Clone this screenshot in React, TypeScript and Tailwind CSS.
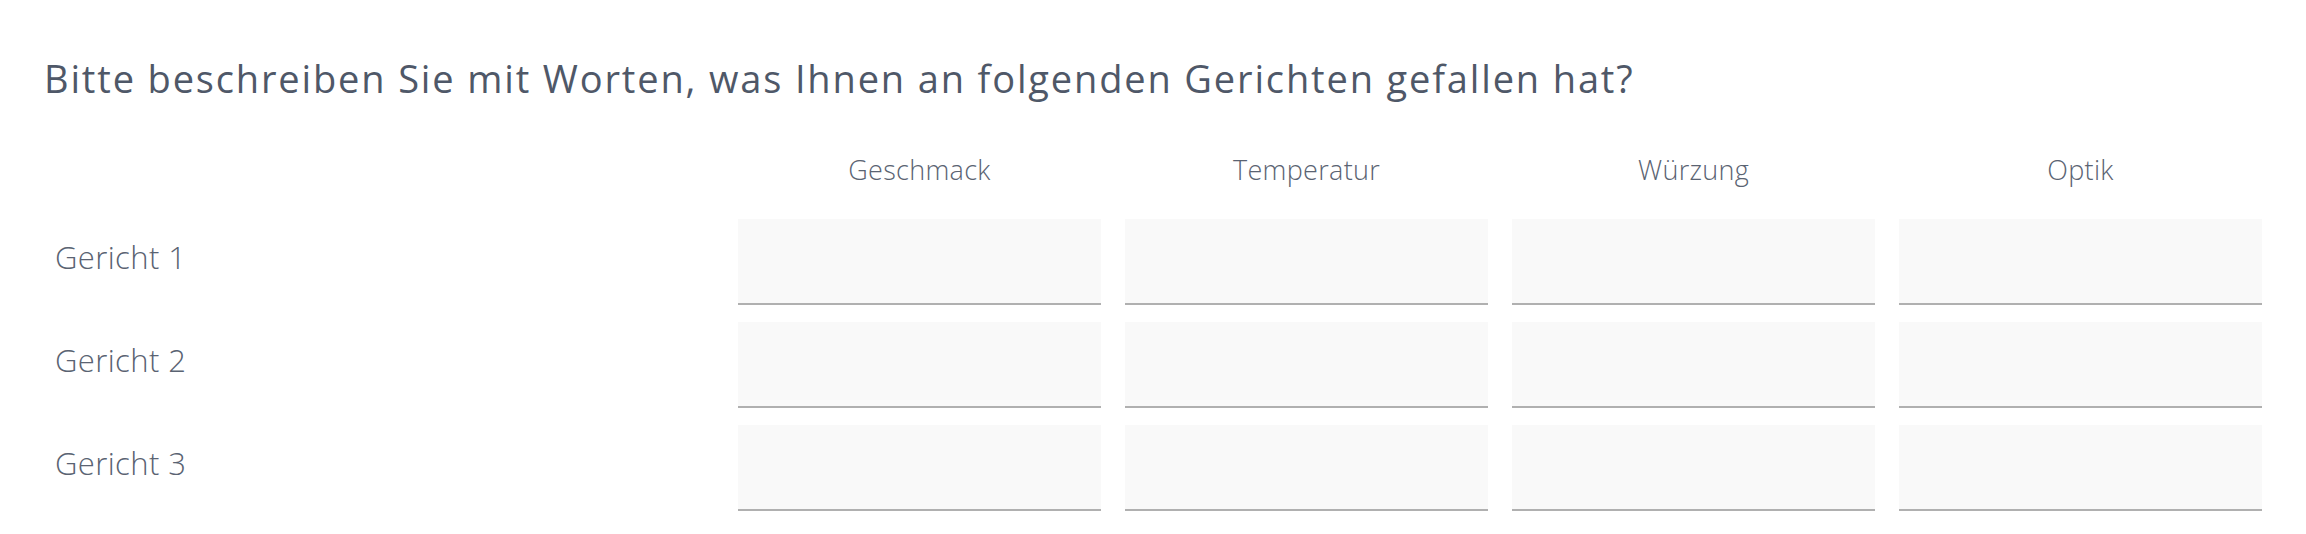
export default function App() {
  const columns = ['Geschmack', 'Temperatur', 'Würzung', 'Optik'];
  const rows = ['Gericht 1', 'Gericht 2', 'Gericht 3'];

  return (
    <div className="min-h-screen bg-white px-[44px] pt-[56px] text-[#4f5868]" style={{ fontFamily: '"Open Sans", "Noto Sans", sans-serif' }}>
      <h1 className="text-[38px] leading-[44px] font-normal tracking-[1.85px]">
        Bitte beschreiben Sie mit Worten, was Ihnen an folgenden Gerichten gefallen hat?
      </h1>

      <div className="mt-[54px] grid grid-cols-[minmax(0,1fr)_repeat(4,363px)] gap-x-6 gap-y-[17px]">
        <div />
        {columns.map((col) => (
          <div key={col} className="text-center text-[27px] leading-[32px] font-light tracking-[0.3px] text-[#5a6372] mb-[16px]">
            {col}
          </div>
        ))}

        {rows.map((row) => (
          <div key={row} className="contents">
            <div className="flex items-center pl-[11px] pb-[10px] text-[31px] leading-[36px] font-light tracking-[0.4px] text-[#5a6372]">
              {row}
            </div>
            {columns.map((col) => (
              <input
                key={col}
                type="text"
                className="h-[86px] w-full bg-[#f9f9f9] border-b-2 border-[#b0b0b0] outline-none"
              />
            ))}
          </div>
        ))}
      </div>
    </div>
  );
}
